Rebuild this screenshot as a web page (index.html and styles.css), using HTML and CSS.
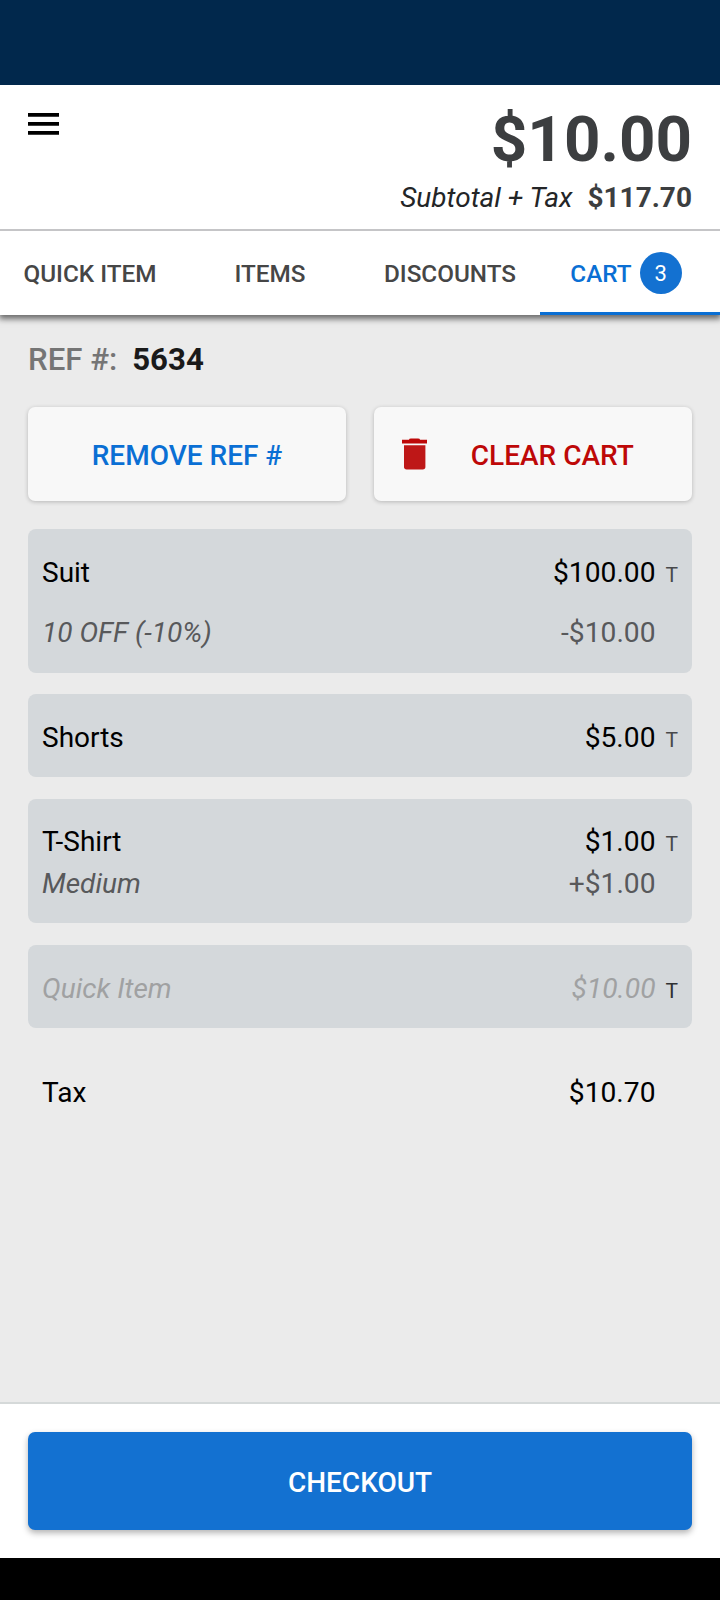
FILE: index.html
```html
<!DOCTYPE html>
<html lang="en">
<head>
  <meta charset="UTF-8" />
  <meta name="viewport" content="width=device-width, initial-scale=1.0"/>
  <title>Cart</title>
  <link rel="stylesheet" href="styles.css">
</head>
<body>
  <div class="app">
    <div class="status-bar"></div>

    <!-- Totals -->
    <header class="header">
      <svg class="menu-icon" width="31" height="22" viewBox="0 0 31 22">
        <path d="M0 0h31v3.7H0zM0 9h31v3.7H0zM0 18.1h31v3.7H0z" fill="#000"/>
      </svg>
      <div class="totals">
        <div class="amount">$10.00</div>
        <div class="subtotal"><em>Subtotal + Tax</em><strong>$117.70</strong></div>
      </div>
    </header>

    <nav class="tabs">
      <div class="tab">QUICK ITEM</div>
      <div class="tab">ITEMS</div>
      <div class="tab">DISCOUNTS</div>
      <div class="tab active">CART<span class="badge">3</span></div>
    </nav>

    <!-- Cart -->
    <main class="cart">
      <div class="ref"><span>REF #:</span><strong>5634</strong></div>

      <div class="actions">
        <button class="action remove">REMOVE REF #</button>
        <button class="action clear">
          <svg class="trash-icon" width="25" height="32" viewBox="0 0 25 32">
            <path d="M7 1.8Q7 .4 9 .4h7q2 0 2 1.4h7v3.6H0V1.8z" fill="#be0808"/>
            <path d="M2 7.3h21.4v21.5q0 2.7-2.7 2.7h-16Q2 31.5 2 28.8z" fill="#be1717"/>
          </svg>
          <span>CLEAR CART</span>
        </button>
      </div>

      <div class="items">
        <div class="item">
          <div class="row"><span class="name">Suit</span><span class="price">$100.00</span><span class="taxed">T</span></div>
          <div class="row sub discount"><span class="name">10 OFF (-10%)</span><span class="price">-$10.00</span><span class="taxed"></span></div>
        </div>
        <div class="item">
          <div class="row"><span class="name">Shorts</span><span class="price">$5.00</span><span class="taxed">T</span></div>
        </div>
        <div class="item">
          <div class="row"><span class="name">T-Shirt</span><span class="price">$1.00</span><span class="taxed">T</span></div>
          <div class="row sub"><span class="name">Medium</span><span class="price">+$1.00</span><span class="taxed"></span></div>
        </div>
        <div class="item pending">
          <div class="row"><span class="name">Quick Item</span><span class="price">$10.00</span><span class="taxed">T</span></div>
        </div>
        <div class="item tax">
          <div class="row"><span class="name">Tax</span><span class="price">$10.70</span><span class="taxed"></span></div>
        </div>
      </div>
    </main>

    <footer class="footer">
      <button class="checkout">CHECKOUT</button>
    </footer>
    <div class="nav-bar"></div>
  </div>
</body>
</html>
```
FILE: styles.css
```css
* {
  box-sizing: border-box;
}

body {
  margin: 0;
  font-family: Roboto, "Liberation Sans", sans-serif;
  background: #ebebeb;
  color: #000;
}

.app {
  display: flex;
  flex-direction: column;
  width: 720px;
  height: 1600px;
  overflow: hidden;
}

.status-bar {
  height: 85px;
  background: #01284c;
}

.header {
  position: relative;
  display: flex;
  justify-content: space-between;
  align-items: flex-start;
  height: 146px;
  padding: 22px 28px 0;
  background: #fff;
  border-bottom: 2px solid #c5c5c7;
  z-index: 2;
}

.menu-icon {
  margin-top: 6px;
}

.totals {
  text-align: right;
  color: #3c3e40;
}

.amount {
  font-size: 63.7px;
  font-weight: 700;
  line-height: 66px;
}

.subtotal {
  margin-top: 8px;
  font-size: 28px;
  line-height: 34px;
}

.subtotal em {
  margin-right: 15px;
  color: #232527;
}

.subtotal strong {
  font-weight: 700;
}

.tabs {
  display: grid;
  grid-template-columns: repeat(4, 1fr);
  height: 84px;
  background: #fff;
  box-shadow: 0 3px 6px 1px rgba(0,0,0,0.55);
  z-index: 1;
}

.tab {
  display: flex;
  justify-content: center;
  align-items: center;
  padding-top: 4px;
  border-bottom: 3px solid transparent;
  font-size: 24.3px;
  font-weight: 500;
  color: #464646;
}

.tab.active {
  padding-right: 8px;
  color: #0a6fd4;
  border-bottom-color: #0a6fd4;
}

.badge {
  width: 42px;
  height: 42px;
  margin-bottom: 2px;
  margin-left: 8px;
  border-radius: 50%;
  background: #1371d1;
  color: #fff;
  font-size: 22px;
  font-weight: 400;
  line-height: 44px;
  text-align: center;
}

.cart {
  flex: 1;
  padding: 27px 28px 0;
}

.ref {
  font-size: 31.2px;
  line-height: 36px;
}

.ref span {
  margin-right: 15px;
  font-weight: 500;
  color: #757575;
}

.ref strong {
  font-weight: 700;
  color: #1a1a1a;
}

.actions {
  display: grid;
  grid-template-columns: 1fr 1fr;
  gap: 28px;
  margin-top: 29px;
}

.action {
  display: flex;
  align-items: center;
  justify-content: center;
  height: 94px;
  padding: 2px 28px 0;
  border: none;
  border-radius: 7px;
  background: #f8f8f8;
  box-shadow: 0 1px 4px rgba(0,0,0,0.22);
  font-family: inherit;
  font-size: 28px;
  font-weight: 500;
}

.remove {
  color: #0a6fd4;
}

.clear {
  color: #be0808;
}

.clear span {
  flex: 1;
  padding-left: 13.5px;
}

.trash-icon {
  margin-bottom: 3px;
}

.items {
  display: flex;
  flex-direction: column;
  gap: 21.7px;
  margin-top: 28px;
}

.item {
  padding: 22.5px 14px 19px;
  border-radius: 8px;
  background: #d4d8db;
}

.row {
  display: flex;
  align-items: baseline;
  height: 41.5px;
  font-size: 28px;
  line-height: 42px;
}

.name {
  flex: 1;
}

.price {
  font-size: 28.2px;
}

.taxed {
  width: 22.5px;
  font-size: 21px;
  text-align: right;
  color: #48494b;
}

.sub {
  color: #58595b;
}

.sub .name {
  font-style: italic;
}

.discount {
  margin-top: 19px;
}

.pending .name,
.pending .price {
  font-style: italic;
  color: #a0a1a2;
}

.pending .taxed {
  color: #303133;
}

.item.tax {
  background: none;
}

.footer {
  height: 156px;
  padding: 28px 28px 0;
  background: #fff;
  border-top: 2px solid #d5d9d9;
}

.checkout {
  width: 100%;
  height: 98px;
  padding-top: 3px;
  border: none;
  border-radius: 7px;
  background: #1371d1;
  box-shadow: 0 3px 6px rgba(0,0,0,0.3);
  color: #fff;
  font-family: inherit;
  font-size: 28px;
  font-weight: 500;
}

.nav-bar {
  height: 42px;
  background: #000;
}
```
